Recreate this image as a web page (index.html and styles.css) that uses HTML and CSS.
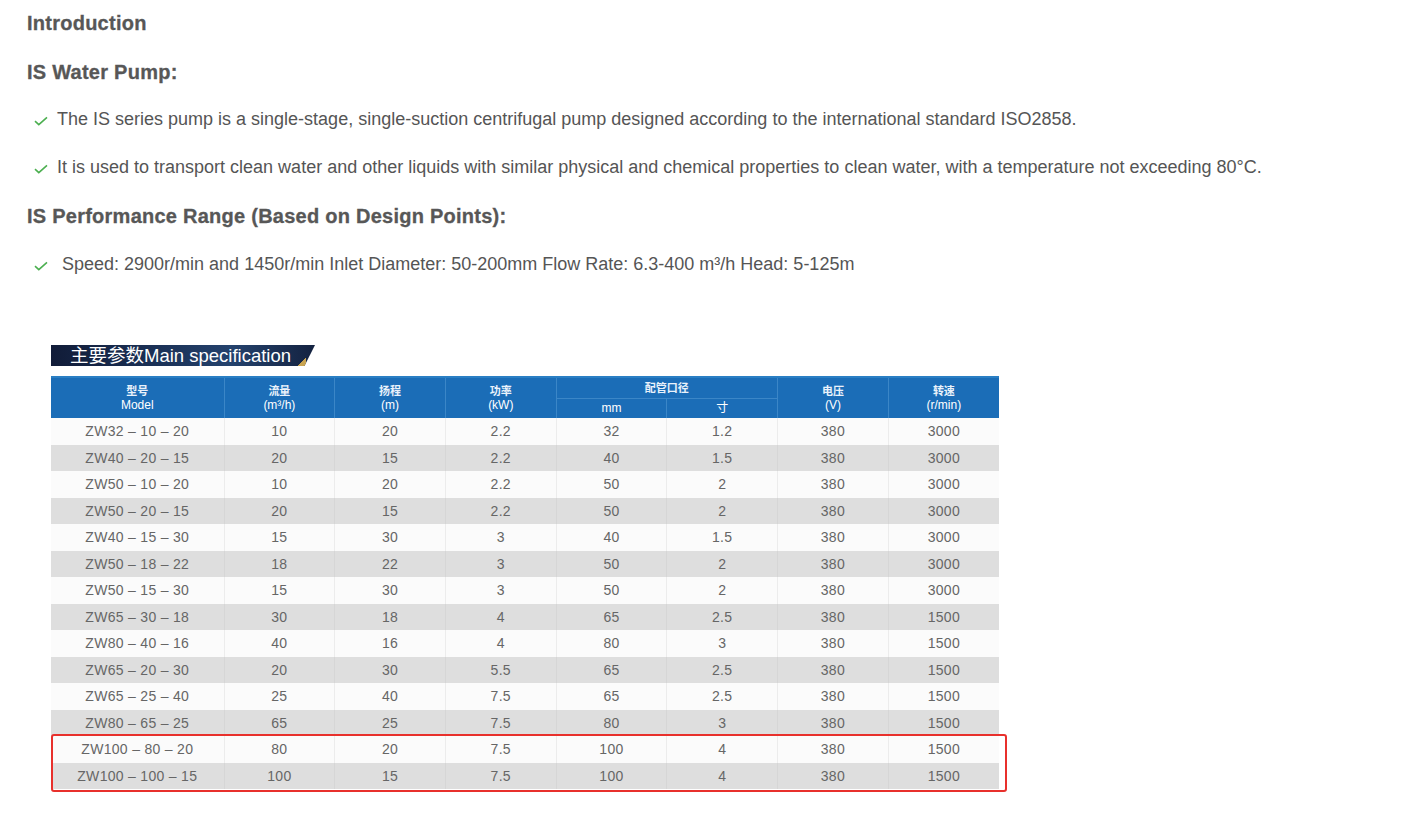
FILE: index.html
```html
<!DOCTYPE html>
<html lang="en">
<head>
<meta charset="utf-8">
<title>IS Water Pump</title>
<link rel="stylesheet" href="styles.css">
</head>
<body>
<main class="page">
  <h2 class="heading h-intro">Introduction</h2>
  <h2 class="heading h-pump">IS Water Pump:</h2>
  <ul class="checks checks-pump">
    <li class="check-item"><svg class="tick" viewBox="0 0 14 10" width="14" height="10"><path d="M1 5.2 L4.8 8.6 L13 1.4" fill="none" stroke="#4caf50" stroke-width="1.6"/></svg><span>The IS series pump is a single-stage, single-suction centrifugal pump designed according to the international standard ISO2858.</span></li>
    <li class="check-item"><svg class="tick" viewBox="0 0 14 10" width="14" height="10"><path d="M1 5.2 L4.8 8.6 L13 1.4" fill="none" stroke="#4caf50" stroke-width="1.6"/></svg><span>It is used to transport clean water and other liquids with similar physical and chemical properties to clean water, with a temperature not exceeding 80°C.</span></li>
  </ul>
  <h2 class="heading h-range">IS Performance Range (Based on Design Points):</h2>
  <ul class="checks checks-range">
    <li class="check-item"><svg class="tick" viewBox="0 0 14 10" width="14" height="10"><path d="M1 5.2 L4.8 8.6 L13 1.4" fill="none" stroke="#4caf50" stroke-width="1.6"/></svg><span class="pad">Speed: 2900r/min and 1450r/min Inlet Diameter: 50-200mm Flow Rate: 6.3-400 m³/h Head: 5-125m</span></li>
  </ul>

  <section class="spec">
    <div class="spec-title"><span>主要参数Main specification</span></div>
    <div class="table-wrap">
      <table class="spec-table">
        <colgroup>
          <col class="c-model"><col class="c-n"><col class="c-n"><col class="c-n"><col class="c-n"><col class="c-n"><col class="c-n"><col class="c-n">
        </colgroup>
        <thead>
          <tr class="hr1">
            <th rowspan="2"><span class="zh">型号</span><span>Model</span></th>
            <th rowspan="2"><span class="zh">流量</span><span>(m³/h)</span></th>
            <th rowspan="2"><span class="zh">扬程</span><span>(m)</span></th>
            <th rowspan="2"><span class="zh">功率</span><span>(kW)</span></th>
            <th colspan="2" class="group"><span class="zh">配管口径</span></th>
            <th rowspan="2"><span class="zh">电压</span><span>(V)</span></th>
            <th rowspan="2" class="last"><span class="zh">转速</span><span>(r/min)</span></th>
          </tr>
          <tr class="hr2">
            <th class="sub">mm</th>
            <th class="sub">寸</th>
          </tr>
        </thead>
        <tbody>
          <tr><td>ZW32 – 10 – 20</td><td>10</td><td>20</td><td>2.2</td><td>32</td><td>1.2</td><td>380</td><td>3000</td></tr>
          <tr><td>ZW40 – 20 – 15</td><td>20</td><td>15</td><td>2.2</td><td>40</td><td>1.5</td><td>380</td><td>3000</td></tr>
          <tr><td>ZW50 – 10 – 20</td><td>10</td><td>20</td><td>2.2</td><td>50</td><td>2</td><td>380</td><td>3000</td></tr>
          <tr><td>ZW50 – 20 – 15</td><td>20</td><td>15</td><td>2.2</td><td>50</td><td>2</td><td>380</td><td>3000</td></tr>
          <tr><td>ZW40 – 15 – 30</td><td>15</td><td>30</td><td>3</td><td>40</td><td>1.5</td><td>380</td><td>3000</td></tr>
          <tr><td>ZW50 – 18 – 22</td><td>18</td><td>22</td><td>3</td><td>50</td><td>2</td><td>380</td><td>3000</td></tr>
          <tr><td>ZW50 – 15 – 30</td><td>15</td><td>30</td><td>3</td><td>50</td><td>2</td><td>380</td><td>3000</td></tr>
          <tr><td>ZW65 – 30 – 18</td><td>30</td><td>18</td><td>4</td><td>65</td><td>2.5</td><td>380</td><td>1500</td></tr>
          <tr><td>ZW80 – 40 – 16</td><td>40</td><td>16</td><td>4</td><td>80</td><td>3</td><td>380</td><td>1500</td></tr>
          <tr><td>ZW65 – 20 – 30</td><td>20</td><td>30</td><td>5.5</td><td>65</td><td>2.5</td><td>380</td><td>1500</td></tr>
          <tr><td>ZW65 – 25 – 40</td><td>25</td><td>40</td><td>7.5</td><td>65</td><td>2.5</td><td>380</td><td>1500</td></tr>
          <tr><td>ZW80 – 65 – 25</td><td>65</td><td>25</td><td>7.5</td><td>80</td><td>3</td><td>380</td><td>1500</td></tr>
          <tr><td>ZW100 – 80 – 20</td><td>80</td><td>20</td><td>7.5</td><td>100</td><td>4</td><td>380</td><td>1500</td></tr>
          <tr><td>ZW100 – 100 – 15</td><td>100</td><td>15</td><td>7.5</td><td>100</td><td>4</td><td>380</td><td>1500</td></tr>
        </tbody>
      </table>
      <div class="highlight"></div>
    </div>
  </section>
</main>
</body>
</html>
```

FILE: styles.css
```css
* { box-sizing: border-box; }
html, body { margin: 0; padding: 0; background: #fff; }
body {
  font-family: "Liberation Sans", Arial, sans-serif;
  color: #555;
}
.page {
  padding: 12px 0 40px 27px;
  display: flex;
  flex-direction: column;
  align-items: flex-start;
}
.heading {
  margin: 0;
  font-size: 20px;
  line-height: 22px;
  font-weight: bold;
  color: #575757;
  letter-spacing: 0.25px;
  -webkit-text-stroke: 0.3px #575757;
}
.h-pump { margin-top: 27px; }
.h-range { margin-top: 27px; }
.checks {
  list-style: none;
  margin: 0;
  padding: 0;
  display: flex;
  flex-direction: column;
  gap: 26px;
}
.checks-pump { margin-top: 25px; }
.checks-range { margin-top: 26px; }
.check-item {
  display: flex;
  align-items: center;
  gap: 9px;
  font-size: 18px;
  line-height: 22px;
  color: #555;
  padding-left: 7px;
}
.check-item .tick { flex: none; margin-top: 3px; }
.check-item .pad { padding-left: 5px; }

.spec {
  margin: 70px 0 0 24px;
  display: flex;
  flex-direction: column;
  gap: 10px;
}
.spec-title {
  position: relative;
  width: 264px;
  height: 21px;
  background: linear-gradient(90deg, #111c38 0%, #1b3156 40%, #24426d 68%, #142240 100%);
  clip-path: polygon(0 0, 100% 0, 96% 100%, 0 100%);
  color: #fff;
  font-family: "Liberation Sans", "Noto Sans CJK SC", sans-serif;
  font-size: 18.5px;
  line-height: 21px;
  padding-left: 19px;
  white-space: nowrap;
}
.spec-title::after {
  content: "";
  position: absolute;
  right: 9px;
  bottom: 0;
  width: 8px;
  height: 8px;
  background: linear-gradient(135deg, transparent 50%, #c9a450 50%);
}
.table-wrap {
  position: relative;
  width: 956px;
}
.spec-table {
  width: 948px;
  border-collapse: collapse;
  table-layout: fixed;
  font-family: "Liberation Sans", "Noto Sans CJK SC", sans-serif;
}
.c-model { width: 173px; }
.c-n { width: 110.7px; }
.spec-table th {
  background: #1b6db7;
  color: #fff;
  font-weight: normal;
  font-size: 12px;
  line-height: 14px;
  padding: 0;
  border-right: 1px solid #3b86c7;
  vertical-align: middle;
}
.spec-table th.last { border-right: none; }
.spec-table th span { display: block; }
.spec-table th .zh { font-size: 11px; font-weight: bold; line-height: 13px; color: #eaf2fb; }
.hr1 th { height: 21px; }
.hr1 th.group { border-bottom: 1px solid #3b86c7; vertical-align: bottom; padding-bottom: 3px; }
.hr2 th { height: 20px; font-size: 12px; }
.spec-table thead tr:first-child th { border-top: 2px solid #2a7fc4; }
.spec-table td {
  height: 26.5px;
  padding: 0;
  text-align: center;
  font-size: 14px;
  color: #666;
  letter-spacing: 0.3px;
  border-right: 1px solid #ececec;
}
.spec-table td:last-child { border-right: none; }
.spec-table tbody tr:nth-child(odd) td { background: #fbfbfb; }
.spec-table tbody tr:nth-child(even) td { background: #dedede; border-right-color: #d6d6d6; }
.highlight {
  position: absolute;
  left: 0;
  right: 0;
  bottom: -3px;
  height: 58px;
  border: 2px solid #e8302c;
  border-radius: 3px;
  pointer-events: none;
}
```
